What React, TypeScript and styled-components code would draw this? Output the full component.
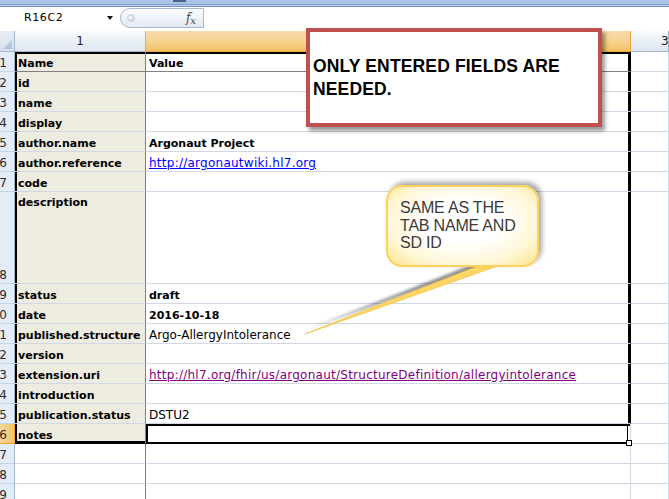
import React from "react";
import styled, { createGlobalStyle } from "styled-components";

const GlobalStyle = createGlobalStyle`
  html, body {
    margin: 0;
    padding: 0;
    background: #fff;
    overflow: hidden;
  }
  body {
    font-family: "DejaVu Sans", Tahoma, sans-serif;
  }
`;

const Window = styled.div`
  position: relative;
  width: 669px;
  height: 499px;
  overflow: hidden;
  background: #fff;
  display: flex;
  flex-direction: column;
`;

/* ---------- formula bar ---------- */

const RibbonEdge = styled.div`
  flex: none;
  height: 7px;
  display: flex;
  background: linear-gradient(#abc5ea 0 4px, #7b9fd2 4px 5px, #c0d4f0 5px 6px, #6d91c6 6px);
`;

const Splitter = styled.div`
  margin-left: 173px;
  width: 13px;
  height: 2px;
  background: #4f6283;
`;

const FormulaBar = styled.div`
  flex: none;
  height: 21px;
  margin-bottom: 3px;
  display: flex;
  background: #fff;
`;

const NameBox = styled.div`
  width: 120px;
  flex: none;
  display: flex;
  align-items: center;
  padding-left: 24px;
  box-sizing: border-box;
  font-size: 11px;
  letter-spacing: 0.6px;
  color: #000;
`;

const DropArrow = styled.span`
  margin-left: auto;
  margin-right: 7px;
  width: 0;
  height: 0;
  border-left: 3.5px solid transparent;
  border-right: 3.5px solid transparent;
  border-top: 4px solid #111;
`;

const FxPill = styled.div`
  width: 84px;
  height: 20px;
  align-self: center;
  box-sizing: border-box;
  display: flex;
  align-items: center;
  padding: 0 7px 0 6px;
  border: 1px solid #a7b8cf;
  border-radius: 10px 0 0 10px;
  background: linear-gradient(#fbfcfe, #e3e9f2);
`;

const Knob = styled.span`
  width: 6px;
  height: 6px;
  border-radius: 50%;
  border: 1px solid #c9d0da;
  background: radial-gradient(circle at 40% 40%, #fff, #b7c0cc);
`;

const Fx = styled.span`
  margin-left: auto;
  font-family: "DejaVu Serif", "Liberation Serif", serif;
  font-style: italic;
  font-size: 12px;
  color: #444;
`;

const FxSub = styled.span`
  font-size: 10px;
  position: relative;
  top: 2px;
`;

const FormulaInput = styled.div`
  flex: 1;
  background: #fff;
`;

/* ---------- sheet grid ---------- */

const Sheet = styled.div`
  flex: none;
  display: grid;
  grid-template-columns: 15px 131px 485px 38px;
  grid-template-rows: 21px repeat(7, 20px) 92px repeat(11, 20px);
`;

const Corner = styled.div`
  display: flex;
  align-items: flex-end;
  justify-content: flex-end;
  padding: 0 2px 2px 0;
  box-sizing: border-box;
  background: linear-gradient(#e6edf7, #d6e0ee);
  border-right: 1px solid #9eb6ce;
  border-bottom: 1px solid #9eb6ce;
`;

const CornerMark = styled.span`
  width: 0;
  height: 0;
  border-left: 9px solid transparent;
  border-bottom: 9px solid #b5c7df;
`;

const ColHeader = styled.div<{ $sel?: boolean; $start?: boolean }>`
  display: flex;
  align-items: center;
  justify-content: ${(p) => (p.$start ? "flex-start" : "center")};
  padding-left: ${(p) => (p.$start ? "30px" : "0")};
  box-sizing: border-box;
  font-size: 12px;
  color: #222;
  border-right: 1px solid ${(p) => (p.$sel ? "#f0a33d" : "#9eb6ce")};
  border-bottom: 1px solid ${(p) => (p.$sel ? "#f0a33d" : "#9eb6ce")};
  background: ${(p) =>
    p.$sel
      ? "linear-gradient(#f9dcaa, #f8d495 45%, #f2c262)"
      : "linear-gradient(#f8fafd, #ebf0f7 50%, #dfe6f0)"};
`;

const RowHeader = styled.div<{ $sel?: boolean }>`
  display: flex;
  justify-content: flex-end;
  align-items: flex-end;
  overflow: hidden;
  white-space: nowrap;
  padding-right: 7px;
  box-sizing: border-box;
  font-size: 12px;
  line-height: 15px;
  color: #2a2a2a;
  background: ${(p) => (p.$sel ? "linear-gradient(90deg, #f8d59a, #f3c46a)" : "#e4ecf7")};
  border-right: 1px solid ${(p) => (p.$sel ? "#f0a33d" : "#9eb6ce")};
  border-bottom: 1px solid ${(p) => (p.$sel ? "#f0a33d" : "#c5d3e6")};
`;

type CellProps = {
  $beige?: boolean;
  $top?: boolean;
  $rc?: string;
  $bc?: string;
  $l?: boolean;
  $t?: boolean;
  $r?: boolean;
  $b?: boolean;
  $sel?: boolean;
};

const frame = (p: CellProps) => {
  const s: string[] = [];
  if (p.$l) s.push("inset 2px 0 0 #000");
  if (p.$t) s.push("inset 0 2px 0 #000");
  if (p.$sel) s.push("inset -2px 0 0 #fff", "inset -3px 0 0 #000", "inset 0 -1px 0 #000");
  if (p.$r) s.push("inset -2px 0 0 #000");
  if (p.$b) s.push("inset 0 -2px 0 #000");
  return s.length ? s.join(", ") : "none";
};

const Cell = styled.div<CellProps>`
  position: relative;
  display: flex;
  align-items: ${(p) => (p.$top ? "flex-start" : "flex-end")};
  padding: ${(p) => (p.$top ? "3px 3px 0" : "0 3px")};
  box-sizing: border-box;
  white-space: nowrap;
  line-height: 15px;
  background: ${(p) => (p.$beige ? "#eeece1" : "#fff")};
  border-right: 1px solid ${(p) => p.$rc || "#d0d7e5"};
  border-bottom: 1px solid ${(p) => p.$bc || "#d0d7e5"};
  box-shadow: ${frame};
`;

const Strong = styled.span`
  font-weight: bold;
  font-size: 11px;
  color: #000;
`;

const Plain = styled.span`
  font-size: 12px;
  color: #000;
`;

const Link = styled.span<{ $visited?: boolean }>`
  font-size: 12px;
  letter-spacing: 0.25px;
  color: ${(p) => (p.$visited ? "#800080" : "#0000ff")};
  text-decoration: underline;
`;

const FillHandle = styled.span`
  position: absolute;
  right: -2px;
  bottom: -3px;
  width: 4px;
  height: 4px;
  border: 1px solid #000;
  background: #fff;
  z-index: 2;
`;

/* ---------- floating shapes ---------- */

const NoteBox = styled.div`
  position: absolute;
  left: 306px;
  top: 28px;
  width: 296px;
  height: 99px;
  box-sizing: border-box;
  border: 4px solid #c0504d;
  background: #fff;
  box-shadow: 3px 4px 4px rgba(0, 0, 0, 0.4);
  padding: 23px 0 0 3px;
  font-family: "Liberation Sans", Arial, sans-serif;
  font-weight: bold;
  font-size: 17.5px;
  line-height: 23px;
  letter-spacing: 0.15px;
  color: #000;
  z-index: 5;
`;

const Bubble = styled.div`
  position: absolute;
  left: 386px;
  top: 185px;
  width: 153px;
  height: 82px;
  box-sizing: border-box;
  border: 2px solid #fbd15c;
  border-radius: 16px;
  background: radial-gradient(ellipse at 50% 45%, #fff 35%, #fff7d8 70%, #ffe38a 100%);
  box-shadow: 3px -3px 5px rgba(0, 0, 0, 0.35);
  padding: 12px 0 0 12px;
  font-family: "Liberation Sans", Arial, sans-serif;
  font-size: 16px;
  line-height: 17.5px;
  letter-spacing: -0.2px;
  color: #3a3a3a;
  z-index: 5;
`;

const Tail = styled.svg`
  position: absolute;
  left: 295px;
  top: 258px;
  overflow: visible;
  z-index: 4;
`;

type Row = {
  name?: string;
  value?: string;
  bold?: boolean;
  link?: "new" | "visited";
  top?: boolean;
};

const rows: Row[] = [
  { name: "Name", value: "Value", bold: true },
  { name: "id" },
  { name: "name" },
  { name: "display" },
  { name: "author.name", value: "Argonaut Project", bold: true },
  { name: "author.reference", value: "http://argonautwiki.hl7.org", link: "new" },
  { name: "code" },
  { name: "description", top: true },
  { name: "status", value: "draft", bold: true },
  { name: "date", value: "2016-10-18", bold: true },
  { name: "published.structure", value: "Argo-AllergyIntolerance" },
  { name: "version" },
  {
    name: "extension.uri",
    value: "http://hl7.org/fhir/us/argonaut/StructureDefinition/allergyintolerance",
    link: "visited",
  },
  { name: "introduction" },
  { name: "publication.status", value: "DSTU2" },
  { name: "notes" },
  {},
  {},
  {},
];

const SELECTED = 16;

const renderValue = (r: Row) => {
  if (!r.value) return null;
  if (r.link) return <Link $visited={r.link === "visited"}>{r.value}</Link>;
  if (r.bold) return <Strong>{r.value}</Strong>;
  return <Plain>{r.value}</Plain>;
};

const App: React.FC = () => {
  return (
    <Window>
      <GlobalStyle />
      <RibbonEdge>
        <Splitter />
      </RibbonEdge>
      <FormulaBar>
        <NameBox>
          R16C2
          <DropArrow />
        </NameBox>
        <FxPill>
          <Knob />
          <Fx>
            f<FxSub>x</FxSub>
          </Fx>
        </FxPill>
        <FormulaInput />
      </FormulaBar>

      <Sheet>
        <Corner>
          <CornerMark />
        </Corner>
        <ColHeader>1</ColHeader>
        <ColHeader $sel />
        <ColHeader $start>3</ColHeader>

        {rows.map((r, i) => {
          const n = i + 1;
          const inTable = n <= SELECTED;
          const first = n === 1;
          const sel = n === SELECTED;
          const headBorder = first ? "#808080" : undefined;
          return (
            <React.Fragment key={n}>
              <RowHeader $sel={sel}>{n}</RowHeader>
              <Cell
                $beige={inTable}
                $top={r.top}
                $rc="#7f7f7f"
                $bc={sel ? "#000" : headBorder}
                $l={inTable}
                $t={first}
                $b={sel}
              >
                {r.name && <Strong>{r.name}</Strong>}
              </Cell>
              <Cell
                $rc={inTable && !sel ? "#000" : undefined}
                $bc={sel ? "#000" : headBorder}
                $t={first || sel}
                $r={inTable && !sel}
                $l={sel}
                $sel={sel}
              >
                {renderValue(r)}
                {sel && <FillHandle />}
              </Cell>
              <Cell />
            </React.Fragment>
          );
        })}
      </Sheet>

      <NoteBox>
        ONLY ENTERED FIELDS ARE
        <br />
        NEEDED.
      </NoteBox>

      <Tail width="225" height="85" viewBox="0 0 225 85">
        <defs>
          <filter id="tailBlur" x="-20%" y="-60%" width="140%" height="220%">
            <feGaussianBlur stdDeviation="1.6" />
          </filter>
        </defs>
        <polygon
          points="10,76 188,6 214,4"
          transform="translate(3,-5)"
          fill="rgba(0,0,0,0.45)"
          filter="url(#tailBlur)"
        />
        <polygon points="10,76 188,6 214,4" fill="#fdd666" stroke="#f5c543" strokeWidth="0.8" />
      </Tail>

      <Bubble>
        SAME AS THE
        <br />
        TAB NAME AND
        <br />
        SD ID
      </Bubble>
    </Window>
  );
};

export default App;
